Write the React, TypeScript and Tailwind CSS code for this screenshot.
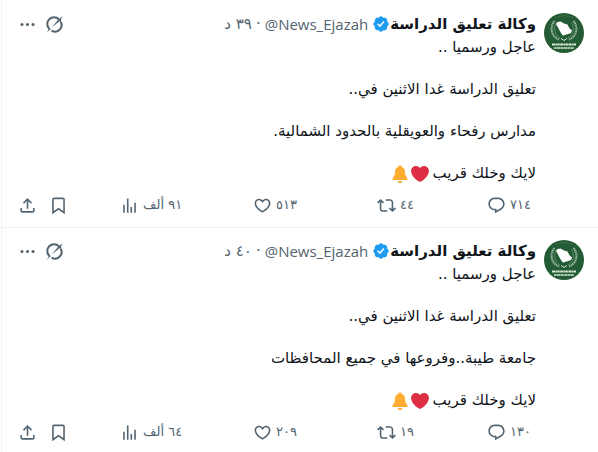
import { ReactNode } from "react";

type post = {
  id: number;
  time: string;
  lines: string[];
  replies: string;
  reposts: string;
  likes: string;
  views: string;
};

const posts: post[] = [
  {
    id: 1,
    time: "٣٩ د",
    lines: ["عاجل ورسميا ..", "تعليق الدراسة غدا الاثنين في..", "مدارس رفحاء والعويقلية بالحدود الشمالية."],
    replies: "٧١٤",
    reposts: "٤٤",
    likes: "٥١٣",
    views: "٩١ ألف",
  },
  {
    id: 2,
    time: "٤٠ د",
    lines: ["عاجل ورسميا ..", "تعليق الدراسة غدا الاثنين في..", "جامعة طيبة..وفروعها في جميع المحافظات"],
    replies: "١٣٠",
    reposts: "١٩",
    likes: "٢٠٩",
    views: "٦٤ ألف",
  },
];

const icons = {
  reply: "M1.751 10c0-4.42 3.584-8 8.005-8h4.366c4.49 0 8.129 3.64 8.129 8.13 0 2.96-1.607 5.68-4.196 7.11l-8.054 4.46v-3.69h-.067c-4.49.1-8.183-3.51-8.183-8.01zm8.005-6c-3.317 0-6.005 2.69-6.005 6 0 3.37 2.77 6.08 6.138 6.01l.351-.01h1.761v2.3l5.087-2.81c1.951-1.08 3.163-3.13 3.163-5.36 0-3.39-2.744-6.13-6.129-6.13H9.756z",
  repost: "M4.5 3.88l4.432 4.14-1.364 1.46L5.5 7.55V16c0 1.1.896 2 2 2H13v2H7.5c-2.209 0-4-1.79-4-4V7.55L1.432 9.48.068 8.02 4.5 3.88zM16.5 6H11V4h5.5c2.209 0 4 1.79 4 4v8.45l2.068-1.93 1.364 1.46-4.432 4.14-4.432-4.14 1.364-1.46 2.068 1.93V8c0-1.1-.896-2-2-2z",
  like: "M16.697 5.5c-1.222-.06-2.679.51-3.89 2.16l-.805 1.09-.806-1.09C9.984 6.01 8.526 5.44 7.304 5.5c-1.243.07-2.349.78-2.91 1.91-.552 1.12-.633 2.78.479 4.82 1.074 1.97 3.257 4.27 7.129 6.61 3.87-2.34 6.052-4.64 7.126-6.61 1.111-2.04 1.03-3.7.477-4.82-.561-1.13-1.666-1.84-2.908-1.91zm4.187 7.69c-1.351 2.48-4.001 5.12-8.379 7.67l-.503.3-.504-.3c-4.379-2.55-7.029-5.19-8.382-7.67-1.36-2.5-1.41-4.86-.514-6.67.887-1.79 2.647-2.91 4.601-3.01 1.651-.09 3.368.56 4.798 2.01 1.429-1.45 3.146-2.1 4.796-2.01 1.954.1 3.714 1.22 4.601 3.01.896 1.81.846 4.17-.514 6.67z",
  views: "M8.75 21V3h2v18h-2zM18 21V8.5h2V21h-2zM4 21l.004-10h2L6 21H4zm9.248 0v-7h2v7h-2z",
  bookmark: "M4 4.5C4 3.12 5.119 2 6.5 2h11C18.881 2 20 3.12 20 4.5v18.44l-8-5.71-8 5.71V4.5zM6.5 4c-.276 0-.5.22-.5.5v14.56l6-4.29 6 4.29V4.5c0-.28-.224-.5-.5-.5h-11z",
  share: "M12 2.59l5.7 5.7-1.41 1.42L13 6.41V16h-2V6.41l-3.3 3.3-1.41-1.42L12 2.59zM21 15l-.02 3.51c0 1.38-1.12 2.49-2.5 2.49H5.5C4.11 21 3 19.88 3 18.5V15h2v3.5c0 .28.22.5.5.5h12.98c.28 0 .5-.22.5-.5L19 15h2z",
  more: "M3 12c0-1.1.9-2 2-2s2 .9 2 2-.9 2-2 2-2-.9-2-2zm9 2c1.1 0 2-.9 2-2s-.9-2-2-2-2 .9-2 2 .9 2 2 2zm7 0c1.1 0 2-.9 2-2s-.9-2-2-2-2 .9-2 2 .9 2 2 2z",
};

const Icon = ({ name }: { name: keyof typeof icons }) => (
  <svg viewBox="0 0 24 24" className="size-[19px] shrink-0 fill-current" aria-hidden="true">
    <path d={icons[name]} />
  </svg>
);

const Grok = () => (
  <svg viewBox="-1 -1 26 26" className="size-[19px]" fill="none" stroke="currentColor" aria-hidden="true">
    <path d="M4.800 18A9 9 0 0 1 18 4.800" strokeWidth="2.800" />
    <path d="M20.600 8.500A9 9 0 0 1 8 20.400" strokeWidth="2.800" />
    <path d="M1 23.500C3 21 4.600 19 4.200 16.200L7 18.600C5.200 19.800 3 21.600 1 23.500z" fill="currentColor" stroke="none" />
    <path d="M8.500 15.800L16.600 5.800L23.200 .5C21 3.600 20.500 5.200 21.400 9L18.800 7.400z" fill="currentColor" stroke="none" />
  </svg>
);

const Verified = () => (
  <svg viewBox="0 0 22 22" className="size-[18px] shrink-0 fill-[#1d9bf0]" role="img" aria-label="حساب موثّق">
    <path d="M20.396 11c-.018-.646-.215-1.275-.57-1.816-.354-.54-.852-.972-1.438-1.246.223-.607.27-1.264.14-1.897-.131-.634-.437-1.218-.882-1.687-.47-.445-1.053-.75-1.687-.882-.633-.13-1.29-.083-1.897.14-.273-.587-.704-1.086-1.245-1.44S11.647 1.62 11 1.604c-.646.017-1.273.213-1.813.568s-.969.854-1.24 1.44c-.608-.223-1.267-.272-1.902-.14-.635.13-1.22.436-1.69.882-.445.47-.749 1.055-.878 1.688-.13.633-.08 1.29.144 1.896-.587.274-1.087.705-1.443 1.245-.356.54-.555 1.17-.574 1.817.02.647.218 1.276.574 1.817.356.54.856.972 1.443 1.245-.224.606-.274 1.263-.144 1.896.13.634.433 1.218.877 1.688.47.443 1.054.747 1.687.878.633.132 1.29.084 1.897-.136.274.586.705 1.084 1.246 1.439.54.354 1.17.551 1.816.569.647-.016 1.276-.213 1.817-.567s.972-.854 1.245-1.44c.604.239 1.266.296 1.903.164.636-.132 1.22-.447 1.68-.907.46-.46.776-1.044.908-1.681s.075-1.299-.165-1.903c.586-.274 1.084-.705 1.439-1.246.354-.54.551-1.17.569-1.816zM9.662 14.85l-3.429-3.428 1.293-1.302 2.072 2.072 4.4-4.794 1.347 1.246z" />
  </svg>
);

const Heart = () => (
  <svg viewBox="0 0 36 36" className="size-[18px]" aria-hidden="true">
    <path fill="#dd2e44" d="M35.885 11.833c0-5.45-4.418-9.868-9.867-9.868-3.308 0-6.227 1.633-8.018 4.129-1.791-2.496-4.71-4.129-8.017-4.129-5.45 0-9.868 4.417-9.868 9.868 0 .772.098 1.52.266 2.241C1.751 22.587 11.216 31.568 18 34.034c6.783-2.466 16.249-11.447 17.617-19.959.17-.721.268-1.469.268-2.242z" />
  </svg>
);

const Bell = () => (
  <svg viewBox="0 0 36 36" className="size-[18px]" fill="#ffac33" aria-hidden="true">
    <path d="M28 13c0 11 5 10.500 5 15.500C33 30 32 30 31 30H5c-1 0-2 0-2-1.500C3 23.500 8 24 8 13 8 7.500 12.500 3 18 3s10 4.500 10 10z" />
    <circle cx="18" cy="3.500" r="3" />
    <path d="M13 32h10c0 2.500-2.200 4-5 4s-5-1.500-5-4z" />
  </svg>
);

// green seal: map inside a wreath, two rows of lettering below
const Avatar = () => (
  <svg viewBox="0 0 40 40" className="size-10 shrink-0" role="img" aria-label="وكالة تعليق الدراسة">
    <circle cx="20" cy="20" r="20" fill="#235c34" />
    <path d="M10.500 8C5.500 14 7 23.500 15 26.500M29.500 8C34.500 14 33 23.500 25 26.500" fill="none" stroke="#9dbaa2" strokeWidth="2" strokeDasharray="1.500 .6" />
    <path d="M12.500 9.500C9 15 10.500 21.500 16 25M27.500 9.500C31 15 29.500 21.500 24 25" fill="none" stroke="#5c8767" strokeWidth="1" />
    <path d="M11 5Q20 0.500 29 5" fill="none" stroke="#578062" strokeWidth="1" strokeDasharray="1 1" />
    <path d="M12 11L13.500 9L16.500 8.500L20 10.500L23.500 11.500L25 14.500L26.500 16.500L28 17L27 20L23.500 21.200L20.500 22L19 22.800L17 20L15 16.500L13.500 13.500z" fill="#fff" />
    <path d="M17 25.500L20 27.500L23 25.500" fill="none" stroke="#d5e2d7" strokeWidth="1" />
    <path d="M8 31.500H32" stroke="#dce8de" strokeWidth="2" strokeDasharray="3 .4 1.500 .3 2.500 .5" />
    <path d="M10 35H30" stroke="#a9c3ad" strokeWidth="1.800" strokeDasharray="2.500 .4 3.500 .3" />
  </svg>
);

const Action = ({ label, icon, count }: { label: string; icon: ReactNode; count?: string }) => (
  <button aria-label={label} className="flex items-center gap-1 cursor-pointer whitespace-nowrap">
    {icon}
    {count && <span dir="rtl" className="text-[13px] leading-5">{count}</span>}
  </button>
);

const Post = ({ post }: { post: post }) => (
  <article className="flex gap-2 pt-3 pb-3 pr-[14px] pl-4 border-b border-[#eff3f4]">
    <a href="#profile" className="shrink-0"><Avatar /></a>

    <div className="flex-1 min-w-0">
      <div className="flex items-center h-[22px] mb-0.5 text-[#536471] text-[15px] whitespace-nowrap">
        <a href="#profile" className="font-bold text-[#0f1419]">وكالة تعليق الدراسة</a>
        <Verified />
        <a href="#profile" dir="ltr" className="font-['Open_Sans'] mr-1">@News_Ejazah</a>
        <span className="mx-1">·</span>
        <a href="#status">{post.time}</a>
        <div className="flex gap-2 mr-auto">
          <Action label="Grok" icon={<Grok />} />
          <Action label="المزيد" icon={<Icon name="more" />} />
        </div>
      </div>

      <div className="text-[15px] leading-[21px] text-[#0f1419]">
        {post.lines.map((line) => (
          <p key={line} className="mb-[21px]">{line}</p>
        ))}
        <p className="flex items-center">
          لايك وخلك قريب
          <span className="flex gap-0.5 mr-1"><Heart /><Bell /></span>
        </p>
      </div>

      <div dir="ltr" className="grid grid-cols-[31px_71px_133fr_124fr_110fr_49px] h-5 mt-[11px] text-[#536471]">
        <Action label="مشاركة" icon={<Icon name="share" />} />
        <Action label="إضافة إلى العلامات" icon={<Icon name="bookmark" />} />
        <Action label="المشاهدات" icon={<Icon name="views" />} count={post.views} />
        <Action label="إعجاب" icon={<Icon name="like" />} count={post.likes} />
        <Action label="إعادة نشر" icon={<Icon name="repost" />} count={post.reposts} />
        <Action label="رد" icon={<Icon name="reply" />} count={post.replies} />
      </div>
    </div>
  </article>
);

export default function App() {
  return (
    <main dir="rtl" lang="ar" className="max-h-screen overflow-hidden ml-px pt-px border-l border-[#eff3f4] bg-white font-['DejaVu_Sans',sans-serif]">
      {posts.map((post) => (
        <Post key={post.id} post={post} />
      ))}
    </main>
  );
}
